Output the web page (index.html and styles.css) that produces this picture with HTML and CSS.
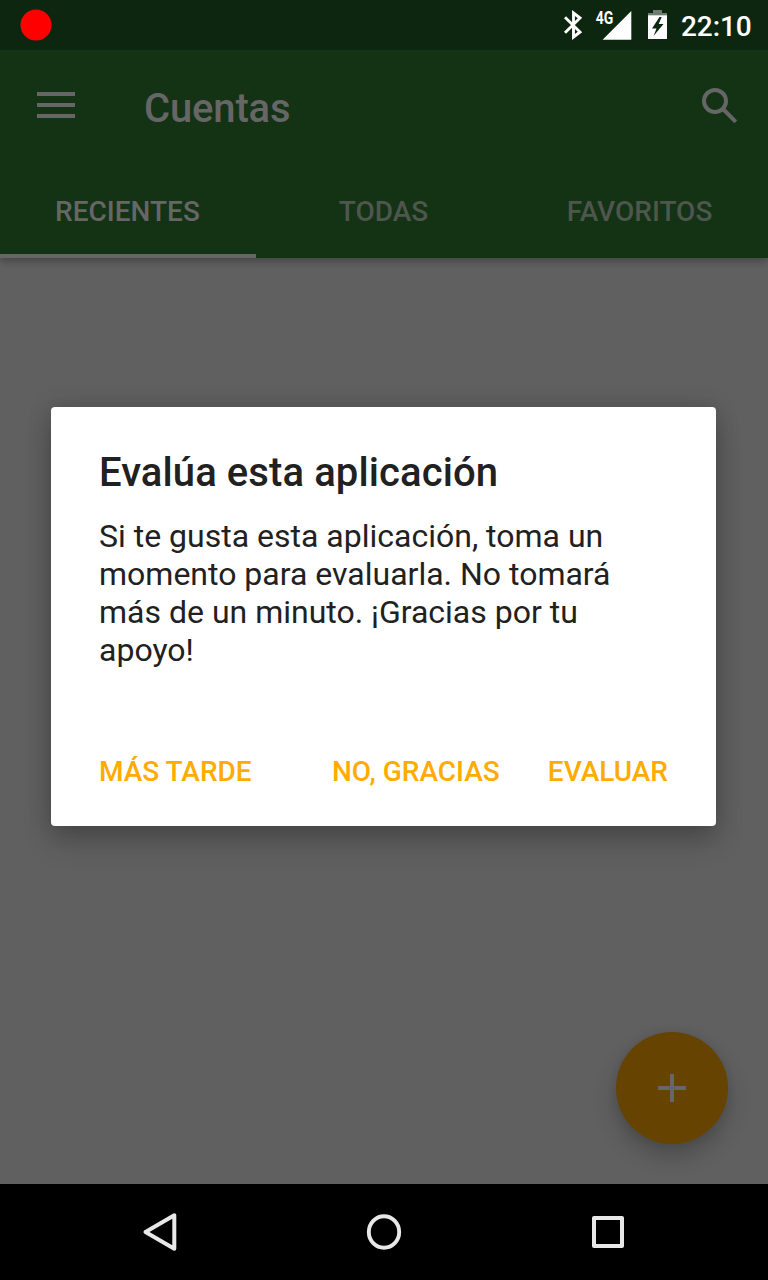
FILE: index.html
```html
<!DOCTYPE html>
<html lang="es">
<head>
<meta charset="utf-8">
<title>Cuentas</title>
<link rel="stylesheet" href="styles.css">
</head>
<body>
<div class="screen">
  <header class="top">
    <div class="status">
      <svg width="32" height="32" viewBox="0 0 32 32"><circle cx="16" cy="16" r="15.500" fill="#f00"/></svg>
      <svg class="status-icons" width="112" height="50" viewBox="560 0 112 50">
        <path d="M565 17.300 580 32 573.500 37V13L580 18 565 32.700" fill="none" stroke="#fff" stroke-width="2.900"/>
        <path d="M631.300 11v28.700H602.600z" fill="#fff"/>
        <text class="network" x="595.700" y="24" textLength="17.500" lengthAdjust="spacingAndGlyphs">4G</text>
        <path d="M653 10h9v3h5v2.500h-19V13h5z" fill="#6e7c6f"/>
        <path d="M648 15.300h19V39h-19zM659.500 17 652 28.500h4.500L653.500 36l10-12h-4.800l3-7z" fill="#fff" fill-rule="evenodd"/>
      </svg>
      <span class="clock">22:10</span>
    </div>
    <div class="toolbar">
      <svg class="menu" width="38" height="26" viewBox="0 0 38 26"><path d="M0 2h38M0 13h38M0 24h38" stroke="#666" stroke-width="4"/></svg>
      <h1 class="title">Cuentas</h1>
      <svg class="search" width="36" height="36" viewBox="0 0 36 36"><g fill="none" stroke="#666" stroke-width="4"><circle cx="13" cy="13" r="11"/><path d="m21.500 21.500 12.300 12.300"/></g></svg>
    </div>
    <nav class="tabs">
      <span class="tab active">RECIENTES</span>
      <span class="tab">TODAS</span>
      <span class="tab">FAVORITOS</span>
    </nav>
  </header>
  <main class="content">
    <div class="fab"><svg width="28" height="28" viewBox="0 0 28 28"><path d="M14 0v28M0 14h28" stroke="#666" stroke-width="4"/></svg></div>
  </main>
  <footer class="navbar">
    <svg width="36" height="40" viewBox="0 0 36 40"><path d="M3.500 20 32.300 3.300v33.400z" fill="none" stroke="#e8e8e8" stroke-width="4" stroke-linejoin="round"/></svg>
    <svg width="36" height="40" viewBox="0 0 36 40"><ellipse cx="18" cy="20" rx="15.200" ry="15.700" fill="none" stroke="#e8e8e8" stroke-width="3.900"/></svg>
    <svg width="36" height="40" viewBox="0 0 36 40"><rect x="4" y="6" width="28" height="28" fill="none" stroke="#e8e8e8" stroke-width="4" stroke-linejoin="round"/></svg>
  </footer>
  <section class="dialog">
    <h2 class="dialog-title">Evalúa esta aplicación</h2>
    <p class="message">Si te gusta esta aplicación, toma un momento para evaluarla. No tomará más de un minuto. ¡Gracias por tu apoyo!</p>
    <div class="actions">
      <span class="action later">MÁS TARDE</span>
      <span class="action">NO, GRACIAS</span>
      <span class="action">EVALUAR</span>
    </div>
  </section>
</div>
</body>
</html>
```
FILE: styles.css
```css
* { box-sizing: border-box; margin: 0; padding: 0; }
body { font-family: Roboto, sans-serif; }
svg { display: block; }
.screen {
  position: relative;
  display: flex;
  flex-direction: column;
  width: 768px;
  height: 1280px;
  overflow: hidden;
  background: #606060;
}
.top {
  background: #143214;
  height: 258px;
  box-shadow: 0 3px 8px rgba(0, 0, 0, .3);
}
.status {
  display: flex;
  align-items: center;
  height: 50px;
  padding: 0 16px 0 20px;
  background: #0d260f;
}
.status-icons { margin-left: auto; margin-right: 9px; }
.network { font-size: 17.5px; font-weight: 700; fill: #fff; }
.clock { width: 71px; padding-top: 2px; font-size: 28px; font-weight: 500; letter-spacing: -.1px; color: #fff; white-space: nowrap; }
.toolbar { display: flex; align-items: center; height: 112px; padding: 0 30px 0 37px; }
.menu { margin-bottom: 2px; }
.title { margin-left: 69px; margin-top: 4px; font-size: 40px; font-weight: 500; letter-spacing: -.15px; color: #666; }
.search { margin-left: auto; }
.tabs { display: grid; grid-template-columns: repeat(3, 1fr); height: 96px; }
.tab {
  padding-top: 33px;
  padding-right: 1px;
  text-align: center;
  font-size: 28px;
  font-weight: 500;
  line-height: 33px;
  color: #4e564e;
}
.tab.active { color: #666; border-bottom: 4px solid #666; }
.content { flex: 1; display: flex; justify-content: flex-end; align-items: flex-end; padding: 40px; }
.fab {
  display: grid;
  place-items: center;
  width: 112px;
  height: 112px;
  border-radius: 50%;
  background: #664400;
  box-shadow: 0 12px 22px rgba(0, 0, 0, .22), 0 0 8px rgba(0, 0, 0, .08);
}
.navbar { position: relative; display: flex; align-items: center; justify-content: space-between; height: 96px; padding: 0 142px; background: #000; }
.dialog {
  position: absolute;
  left: 51px;
  top: 407px;
  width: 665px;
  height: 419px;
  padding: 42px 48px 38px;
  border-radius: 4px;
  background: #fff;
  color: #212121;
  display: flex;
  flex-direction: column;
  box-shadow: 0 16px 28px rgba(0, 0, 0, .2), 0 0 24px rgba(0, 0, 0, .16);
}
.dialog-title { font-size: 40px; font-weight: 500; line-height: 47px; letter-spacing: .1px; }
.message { margin-top: 21px; font-size: 32px; line-height: 38px; }
.actions { display: flex; gap: 48px; margin-top: auto; }
.action { font-size: 28px; font-weight: 500; line-height: 33px; color: #ffab00; white-space: nowrap; }
.later { margin-right: auto; }
```
